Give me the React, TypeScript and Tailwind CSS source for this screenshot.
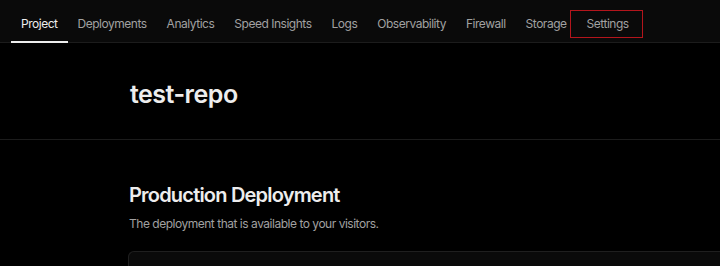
import React from 'react';

const tabs = [
  'Project',
  'Deployments',
  'Analytics',
  'Speed Insights',
  'Logs',
  'Observability',
  'Firewall',
  'Storage',
  'Settings',
];

const App: React.FC = () => {
  return (
    <div className="h-[266px] w-[720px] overflow-hidden bg-black font-['Inter',sans-serif] antialiased">
      {/* top tabs */}
      <nav className="flex h-[43px] items-stretch border-b border-[#1c1c1c] bg-[#0a0a0a] pl-[11px]">
        {tabs.map(tab => {
          const active = tab === 'Project';
          const marked = tab === 'Settings';
          return (
            <div
              key={tab}
              className={`relative flex items-center px-[10px] pt-[6px] text-[12px] tracking-[-0.04em] ${
                active ? 'text-[#ededed]' : 'text-[#a1a1a1]'
              }`}
            >
              {tab}
              {active && <span className="absolute bottom-[-1px] left-0 right-0 h-[2px] bg-[#ededed]" />}
              {marked && (
                <span className="absolute -left-[7px] -right-[4px] top-[10px] bottom-[4px] border border-[#b4151c]" />
              )}
            </div>
          );
        })}
      </nav>

      {/* project title */}
      <div className="h-[97px] border-b border-[#1c1c1c] pl-[130px] pt-[35px]">
        <h1 className="text-[25px] font-semibold leading-[32px] tracking-[-0.02em] text-[#ededed]">test-repo</h1>
      </div>

      {/* production deployment */}
      <section className="pl-[128px] pt-[41px]">
        <h2 className="pl-[1px] text-[20px] font-semibold leading-[28px] tracking-[-0.04em] text-[#ededed]">
          Production Deployment
        </h2>
        <p className="mt-[7px] pl-[1px] text-[12px] leading-[16px] tracking-[-0.04em] text-[#a1a1a1]">
          The deployment that is available to your visitors.
        </p>
        <div className="mt-[19px] h-[40px] rounded-l-[6px] border border-r-0 border-[#1f1f1f] bg-[#0a0a0a]" />
      </section>
    </div>
  );
};

export default App;
